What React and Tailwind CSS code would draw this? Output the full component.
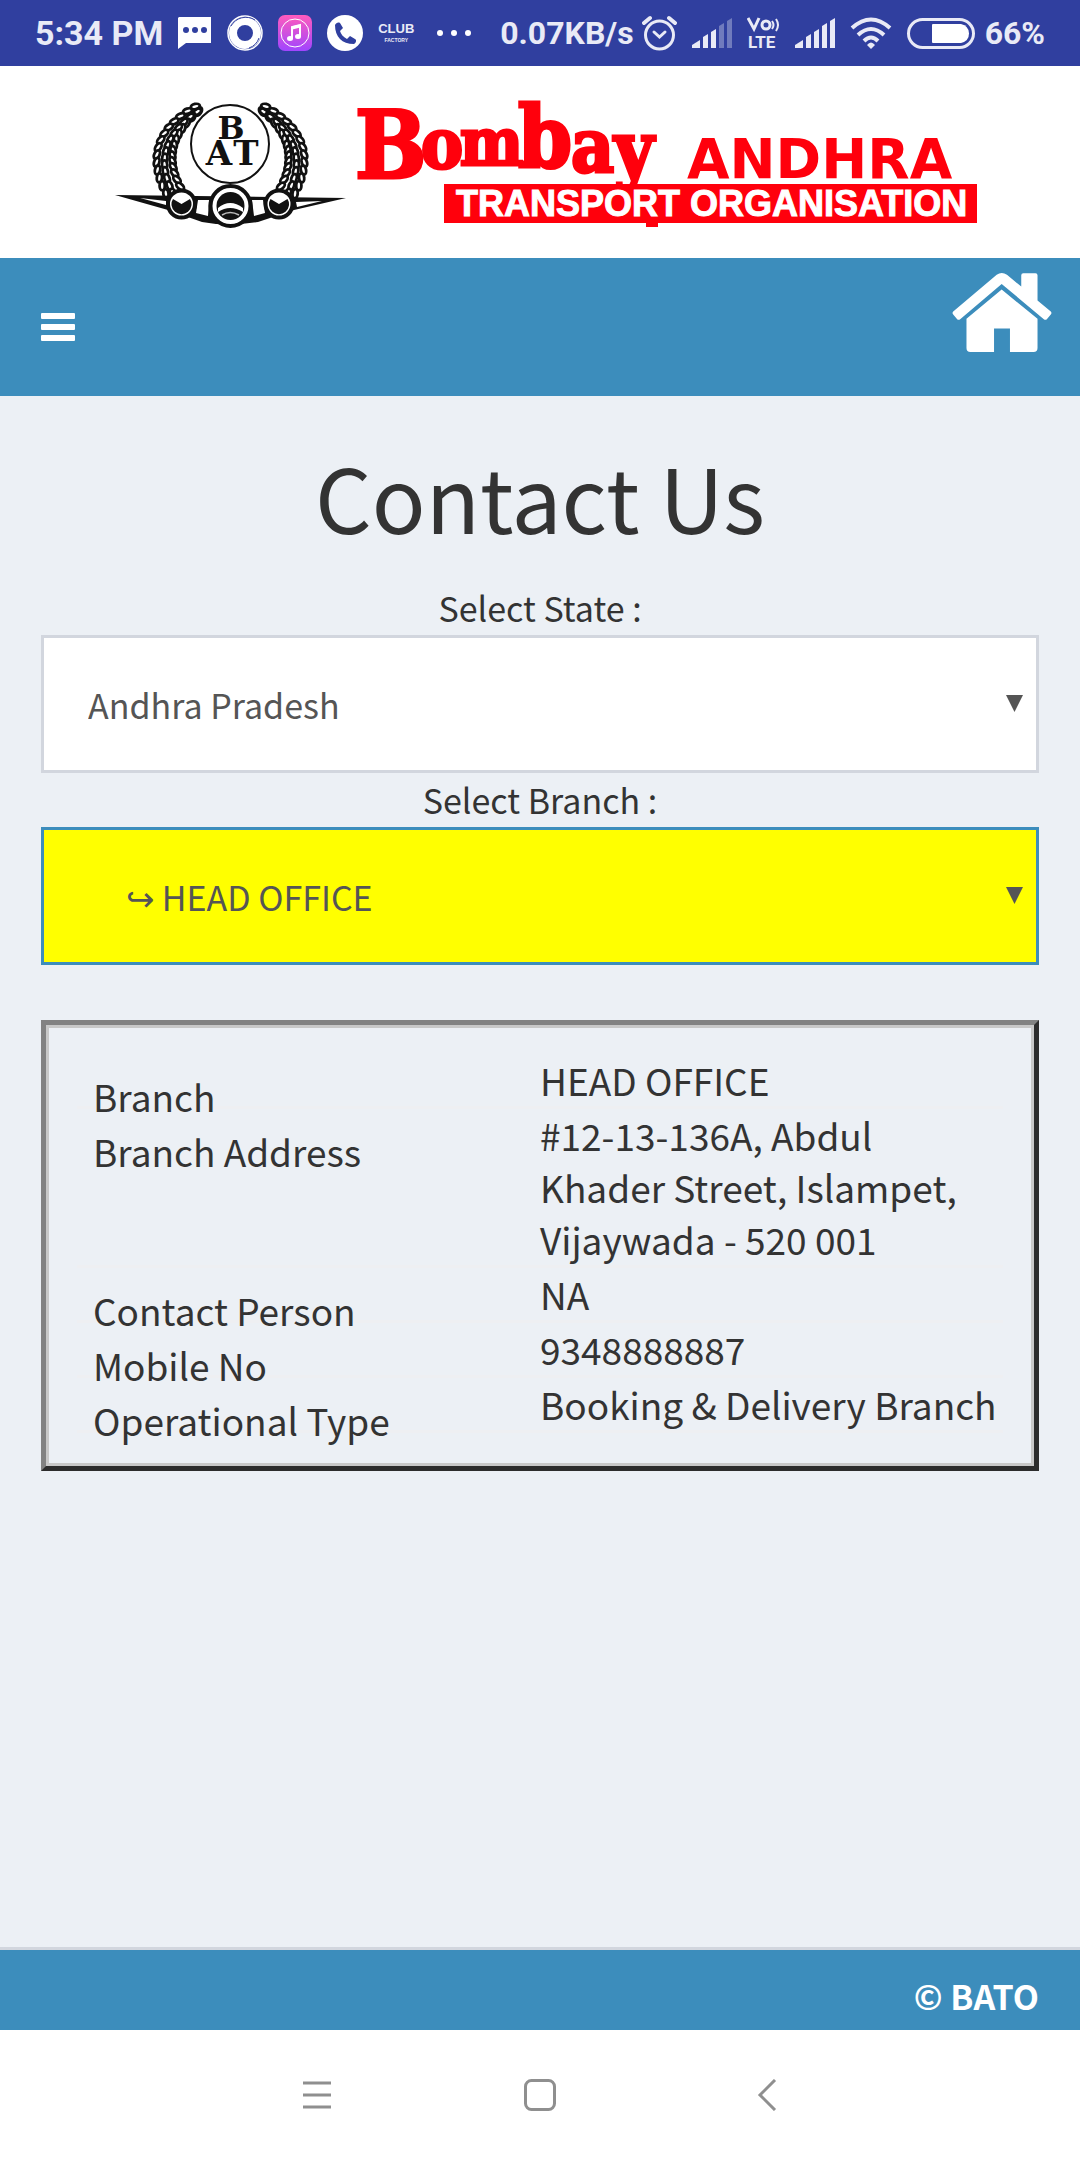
import React, { useState } from 'react';

const contacts = {
  'HEAD OFFICE': [
    { label: 'Branch', lines: ['HEAD OFFICE'] },
    { label: 'Branch Address', lines: ['#12-13-136A, Abdul', 'Khader Street, Islampet,', 'Vijaywada - 520 001'] },
    { label: 'Contact Person', lines: ['NA'] },
    { label: 'Mobile No', lines: ['9348888887'] },
    { label: 'Operational Type', lines: ['Booking & Delivery Branch'] },
  ],
};

// one side of the wreath, seeds placed three abreast along a curve
const seeds = [];
for (let i = 0; i <= 13; i++) {
  const t = i / 13;
  const u = 1 - t;
  const x = u * u * 197 + 2 * u * t * 148 + t * t * 173;
  const y = u * u * 107 + 2 * u * t * 140 + t * t * 188;
  const dx = 2 * u * (148 - 197) + 2 * t * (173 - 148);
  const dy = 2 * u * (140 - 107) + 2 * t * (188 - 140);
  const len = Math.hypot(dx, dy);
  const angle = (Math.atan2(dy, dx) * 180) / Math.PI - 90;
  const spread = 3 + 5 * Math.sin(Math.min(1, t * 1.4) * 1.57);
  [-1, 0, 1].forEach((k) => {
    seeds.push({
      x: x - (dy / len) * spread * k,
      y: y + (dx / len) * spread * k + (k === 0 ? 3 : 0),
      angle: angle + k * 22,
    });
  });
}

const Wreath = () => (
  <g fill="#fff" stroke="#111" strokeWidth="2.8">
    {seeds.map((s, i) => (
      <ellipse key={i} cx={s.x} cy={s.y} rx="2.6" ry="4.6" transform={`rotate(${s.angle} ${s.x} ${s.y})`} />
    ))}
  </g>
);

const Logo = () => (
  <svg viewBox="100 90 880 140" className="w-[880px] max-w-full" role="img" aria-label="Bombay Andhra Transport Organisation">
    <Wreath />
    <g transform="translate(461 0) scale(-1 1)">
      <Wreath />
    </g>
    <circle cx="230" cy="142" r="39" fill="#fff" stroke="#111" strokeWidth="2" />
    <g className="font-['DejaVu_Serif',serif] font-bold" fill="#111" textAnchor="middle">
      <text x="231" y="137" fontSize="32">B</text>
      <text x="219" y="163" fontSize="34">A</text>
      <text x="246" y="163" fontSize="34">T</text>
    </g>
    <path d="M115 193L346 196L294 208L258 220Q230 225 202 220L168 208Z" fill="#111" />
    <path d="M140 196L166 199L166 203ZM322 199L296 200L297 205ZM198 198H209L208 214L196 211ZM252 198H263L265 211L254 214Z" fill="#fff" />
    <g fill="#fff" stroke="#111" strokeWidth="4">
      <circle cx="181.500" cy="202" r="13.500" />
      <circle cx="279" cy="202" r="13.500" />
      <circle cx="230.500" cy="204" r="20" />
    </g>
    <path d="M173 197L181.500 202L190 197A10 10 0 1 1 173 197ZM270.500 197L279 202L287.500 197A10 10 0 1 1 270.500 197Z" fill="#111" />
    <circle cx="230.500" cy="204" r="14" fill="#111" />
    <path d="M218 206Q230 196 243 206V210Q230 202 218 210Z" fill="#fff" />
    <path d="M222 213Q230 208 239 213" fill="none" stroke="#bbb" strokeWidth="1.500" />
    <g fill="#ff000c">
      <g className="font-['DejaVu_Serif_Condensed','DejaVu_Serif',serif] font-bold" stroke="#ff000c" strokeWidth="3">
        <text x="355" y="176" fontSize="94">B</text>
        <text x="421" y="166" fontSize="70">o</text>
        <text x="460" y="163" fontSize="66">m</text>
        <text x="518" y="166" fontSize="86">b</text>
        <text x="571" y="170" fontSize="74">a</text>
        <text x="614" y="174" fontSize="76">y</text>
      </g>
      <path d="M444 182H977V221H658V225H646V221H444Z" />
      <text x="687" y="176" fontSize="55" className="font-['DejaVu_Sans',sans-serif] font-bold">ANDHRA</text>
    </g>
    <text x="456" y="214" fontSize="36" fill="#fff" stroke="#fff" strokeWidth="1" className="font-['Liberation_Sans',sans-serif] font-bold">
      TRANSPORT ORGANISATION
    </text>
  </svg>
);

const SignalIcon = ({ level }) => (
  <svg viewBox="0 0 40 30" className="h-[30px] w-10 shrink-0" fill="currentColor">
    <path d="M0 30V27L8 22V30Z" />
    <path d="M11 30V19L16 16V30Z" />
    <path d="M19 30V14L24 11V30Z" />
    <path d="M27 30V8L32 5V30Z" opacity={level > 3 ? 1 : 0.35} />
    <path d="M35 30V3L40 0V30Z" opacity={level > 4 ? 1 : 0.35} />
  </svg>
);

const StatusBar = () => (
  <div className="flex h-[66px] items-center justify-between whitespace-nowrap bg-[#303f9f] px-[35px] font-['Roboto',sans-serif] text-[32px] font-bold text-[#e9eaf6]">
    <div className="flex items-center gap-[15px]">
      <span className="text-[34px]">5:34 PM</span>
      <svg viewBox="0 0 34 32" className="h-8 w-[34px]">
        <path d="M1 0H33V26H8L0 32V1Z" fill="#fff" />
        <g fill="#303f9f">
          <circle cx="8" cy="13" r="3" />
          <circle cx="17" cy="13" r="3" />
          <circle cx="26" cy="13" r="3" />
        </g>
      </svg>
      <svg viewBox="0 0 36 38" className="h-[38px] w-9">
        <circle cx="18" cy="19" r="12" fill="none" stroke="#fff" strokeWidth="8" />
        <circle cx="18" cy="19" r="17" fill="none" stroke="#fff" strokeWidth="1.500" />
        <path d="M4 12A17 17 0 0 1 28 6M32 24A16 16 0 0 1 22 34" fill="none" stroke="#303f9f" strokeWidth="1" />
      </svg>
      <svg viewBox="0 0 34 36" className="h-9 w-[34px]">
        <defs>
          <linearGradient id="music" x1="0" y1="0" x2="0" y2="1">
            <stop offset="0" stopColor="#ff5bbd" />
            <stop offset="1" stopColor="#a045ff" />
          </linearGradient>
        </defs>
        <rect width="34" height="36" rx="7" fill="url(#music)" />
        <circle cx="17" cy="18" r="14" fill="none" stroke="#fff" strokeWidth="1" />
        <path d="M14 23V12L22 10V21" fill="none" stroke="#fff" strokeWidth="2" />
        <path d="M14 13L22 11" stroke="#fff" strokeWidth="3" />
        <ellipse cx="12" cy="23.500" rx="3" ry="2.500" fill="#fff" />
        <ellipse cx="20" cy="21.500" rx="3" ry="2.500" fill="#fff" />
      </svg>
      <svg viewBox="0 0 36 36" className="size-9">
        <circle cx="18" cy="18" r="18" fill="#fff" />
        <path d="M8 10C8 22 15 29 27 29C29 28 30 25 28 24L23 21L20 24C16 22 14 19 13 16L16 13L13 8C11 7 9 8 8 10Z" fill="#303f9f" />
      </svg>
      <div className="flex flex-col items-center font-['Liberation_Sans',sans-serif]">
        <span className="text-[13px] leading-[14px]">CLUB</span>
        <span className="text-[5px] leading-[8px]">FACTORY</span>
      </div>
      <svg viewBox="0 0 34 6" className="ml-2 h-[6px] w-[34px]" fill="#fff">
        <circle cx="3" cy="3" r="3" />
        <circle cx="17" cy="3" r="3" />
        <circle cx="31" cy="3" r="3" />
      </svg>
    </div>
    <div className="flex items-center gap-[15px]">
      <div className="flex items-center gap-2">
        <span>0.07KB/s</span>
        <svg viewBox="0 0 35 36" className="h-9 w-[35px] shrink-0" fill="none" stroke="currentColor" strokeWidth="3" strokeLinecap="round">
          <circle cx="17.500" cy="20" r="14" />
          <path d="M12 17L17.500 22L23 17" />
          <path d="M2 8L8 3M33 8L27 3" strokeWidth="4" />
        </svg>
      </div>
      <SignalIcon level={3} />
      <svg viewBox="0 0 33 32" className="h-8 w-[33px] shrink-0" fill="none" stroke="currentColor" strokeWidth="3">
        <path d="M1 1L7 12L12 1" />
        <circle cx="19" cy="8" r="4" />
        <path d="M25 4Q28 8 25 12M29 2Q33 8 29 14" strokeWidth="2" />
        <text x="1" y="31" fontSize="17" fill="currentColor" stroke="none" className="font-['Roboto',sans-serif] font-bold">LTE</text>
      </svg>
      <SignalIcon level={5} />
      <svg viewBox="0 0 42 32" className="h-8 w-[42px] shrink-0" fill="none" stroke="currentColor" strokeWidth="4">
        <path d="M2 11Q21 -6 40 11" />
        <path d="M8 18Q21 6 34 18" />
        <path d="M14 24Q21 17 28 24" />
        <path d="M17 28Q21 23 25 28L21 32Z" fill="currentColor" stroke="none" />
      </svg>
      <div className="flex items-center gap-[10px]">
        <svg viewBox="0 0 68 31" className="h-[31px] w-[68px] shrink-0">
          <rect x="1.500" y="1.500" width="65" height="28" rx="14" fill="none" stroke="currentColor" strokeWidth="3" />
          <path d="M26 6H54Q62 8 62 15.500T54 25H26Q25 25 25 24V7Q25 6 26 6Z" fill="#fff" />
        </svg>
        <span>66%</span>
      </div>
    </div>
  </div>
);

const SelectBox = ({ id, label, value, onChange, className, children }) => (
  <div>
    <label htmlFor={id} className="block text-center text-[34px] leading-[54px]">
      {label}
    </label>
    <div className="relative">
      <select
        id={id}
        value={value}
        onChange={(e) => onChange(e.target.value)}
        className={`block h-[138px] w-full appearance-none border-[3px] px-11 text-[34px] text-[#555] outline-none ${className}`}
      >
        {children}
      </select>
      <svg viewBox="0 0 17 17" className="pointer-events-none absolute right-4 top-[60px] size-[17px]" fill="#555">
        <path d="M0 0H17L8.500 17Z" />
      </svg>
    </div>
  </div>
);

const App = () => {
  const [state, setState] = useState('Andhra Pradesh');
  const [branch, setBranch] = useState('HEAD OFFICE');

  return (
    <div className="flex min-h-screen flex-col bg-[#ecf0f5] font-['Noto_Sans_CJK_SC',sans-serif] text-[#333]">
      <StatusBar />

      <header>
        <div className="flex h-48 items-center justify-center bg-white">
          <Logo />
        </div>
        <nav className="flex h-[138px] items-center justify-between bg-[#3c8dbc] pl-[41px] pr-7">
          <button type="button" aria-label="Menu">
            <svg viewBox="0 0 34 28" className="h-7 w-[34px]" fill="#fff">
              <rect width="34" height="6" rx="1" />
              <rect y="11" width="34" height="6" rx="1" />
              <rect y="22" width="34" height="6" rx="1" />
            </svg>
          </button>
          <a href="#home" aria-label="Home" className="self-start pt-[15px]">
            <svg viewBox="0 0 300 238" className="h-[79px] w-[100px]" fill="#fff">
              <path d="M134 5Q149 -5 165 5L208 41V7Q208 1 214 1H251Q257 1 257 7V83L297 116Q301 121 297 125L285 139Q281 143 276 139L149 33L24 139Q19 143 15 139L3 125Q-1 121 3 116Z" />
              <path d="M149 50L257 138V226Q257 238 245 238H174V167H126V238H55Q43 238 43 226V138Z" />
            </svg>
          </a>
        </nav>
      </header>

      <main className="flex-1 px-[41px] pt-[50px]">
        <h1 className="mb-[35px] text-center text-[89px] leading-[100px]">Contact Us</h1>

        <SelectBox id="state" label="Select State :" value={state} onChange={setState} className="border-[#d2d6de] bg-white">
          <option value="Andhra Pradesh">Andhra Pradesh</option>
        </SelectBox>
        <SelectBox id="branch" label="Select Branch :" value={branch} onChange={setBranch} className="border-[#3c8dbc] bg-[#ffff00]">
          <option value="HEAD OFFICE">{'\u00a0\u00a0\u00a0\u00a0\u00a0↪ HEAD OFFICE'}</option>
        </SelectBox>

        <div className="mt-[55px] border-[5px] border-b-[#2c2c2c] border-l-[#828282] border-r-[#2c2c2c] border-t-[#828282]">
          <div className="border-[3px] border-[#c8c8c8] px-7 pb-[30px] pt-[26px]">
            <table className="w-full table-fixed text-left text-[37px] leading-[52px]">
              <tbody>
                {contacts[branch].map((row) => (
                  <tr key={row.label} className="border-b-[3px] border-[#eeeff2] align-top">
                    {/* labels hang a little below the value beside them */}
                    <th scope="row" className="pl-4 font-normal">
                      <div className="-mb-4 mt-4">{row.label}</div>
                    </th>
                    <td className="whitespace-nowrap">
                      {row.lines.map((line) => (
                        <div key={line}>{line}</div>
                      ))}
                    </td>
                  </tr>
                ))}
              </tbody>
            </table>
          </div>
        </div>
      </main>

      <footer className="border-t-[3px] border-[#d2d6de] bg-[#3c8dbc] px-[41px] pb-2 pt-5 text-right text-[34px] font-bold leading-[52px] text-white">
        © BATO
      </footer>

      <div className="flex h-[130px] items-center justify-center bg-white text-[#8f8f8f]">
        <button type="button" aria-label="Recent apps" className="flex w-[225px] justify-center">
          <svg viewBox="0 0 32 32" className="size-8" fill="none" stroke="currentColor" strokeWidth="3">
            <path d="M4 4H32M4 16H32M4 28H32" />
          </svg>
        </button>
        <button type="button" aria-label="Home screen" className="flex w-[225px] justify-center">
          <svg viewBox="0 0 32 32" className="size-8" fill="none" stroke="currentColor" strokeWidth="3">
            <rect x="1.500" y="1.500" width="29" height="29" rx="6" />
          </svg>
        </button>
        <button type="button" aria-label="Back" className="flex w-[225px] justify-center">
          <svg viewBox="0 0 32 32" className="size-8" fill="none" stroke="currentColor" strokeWidth="3">
            <path d="M26 1L11 16L26 31" />
          </svg>
        </button>
      </div>
    </div>
  );
};

export default App;
